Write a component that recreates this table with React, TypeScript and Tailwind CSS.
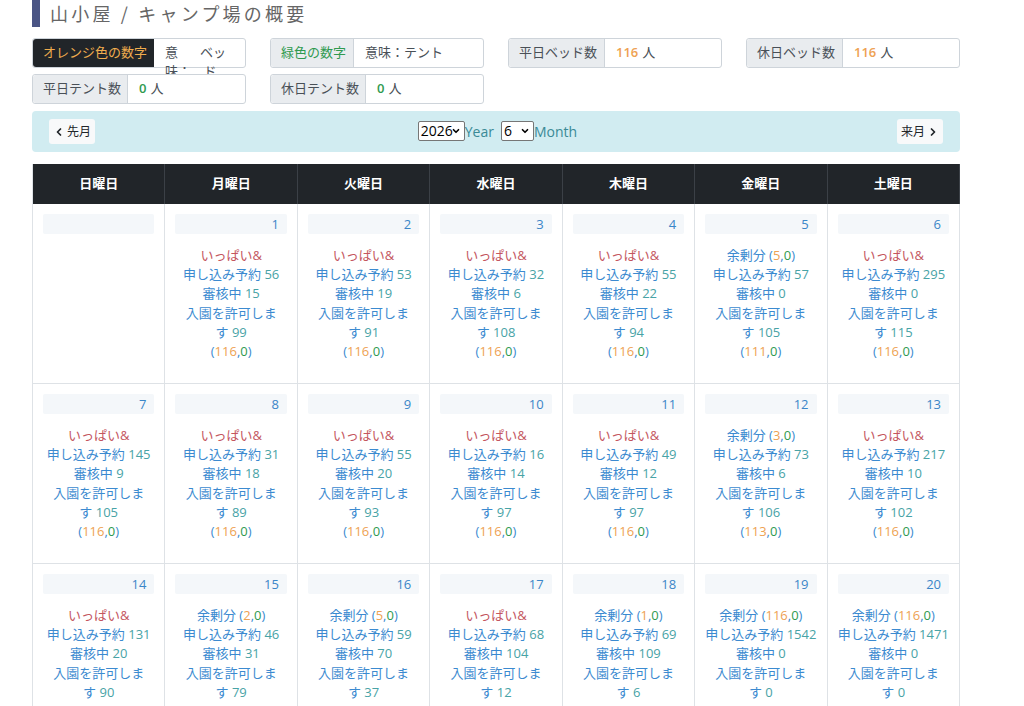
import React from 'react';
import { ChevronDown, ChevronLeft, ChevronRight } from 'lucide-react';

type Day = {
  d?: number;
  full?: boolean;
  rem?: number;
  apply?: number;
  review?: number;
  ok?: number;
  bed?: number;
};

const weeks: Day[][] = [
  [
    {},
    { d: 1, full: true, apply: 56, review: 15, ok: 99, bed: 116 },
    { d: 2, full: true, apply: 53, review: 19, ok: 91, bed: 116 },
    { d: 3, full: true, apply: 32, review: 6, ok: 108, bed: 116 },
    { d: 4, full: true, apply: 55, review: 22, ok: 94, bed: 116 },
    { d: 5, rem: 5, apply: 57, review: 0, ok: 105, bed: 111 },
    { d: 6, full: true, apply: 295, review: 0, ok: 115, bed: 116 },
  ],
  [
    { d: 7, full: true, apply: 145, review: 9, ok: 105, bed: 116 },
    { d: 8, full: true, apply: 31, review: 18, ok: 89, bed: 116 },
    { d: 9, full: true, apply: 55, review: 20, ok: 93, bed: 116 },
    { d: 10, full: true, apply: 16, review: 14, ok: 97, bed: 116 },
    { d: 11, full: true, apply: 49, review: 12, ok: 97, bed: 116 },
    { d: 12, rem: 3, apply: 73, review: 6, ok: 106, bed: 113 },
    { d: 13, full: true, apply: 217, review: 10, ok: 102, bed: 116 },
  ],
  [
    { d: 14, full: true, apply: 131, review: 20, ok: 90, bed: 116 },
    { d: 15, rem: 2, apply: 46, review: 31, ok: 79, bed: 114 },
    { d: 16, rem: 5, apply: 59, review: 70, ok: 37, bed: 111 },
    { d: 17, full: true, apply: 68, review: 104, ok: 12, bed: 116 },
    { d: 18, rem: 1, apply: 69, review: 109, ok: 6, bed: 115 },
    { d: 19, rem: 116, apply: 1542, review: 0, ok: 0, bed: 0 },
    { d: 20, rem: 116, apply: 1471, review: 0, ok: 0, bed: 0 },
  ],
];

const heads = ['日曜日', '月曜日', '火曜日', '水曜日', '木曜日', '金曜日', '土曜日'];

const Num: React.FC<{ v?: number }> = ({ v }) => <span className="text-[#48a3a6]">{v}</span>;

const Pair: React.FC<{ v?: number }> = ({ v }) => (
  <>
    (<span className="text-[#eea253]">{v}</span>,<span className="text-[#2f9a4f]">0</span>)
  </>
);

const Cell: React.FC<{ day: Day }> = ({ day }) => (
  <div className="h-[180px] border-r border-b border-[#dee2e6] pt-[10px]">
    <div className="mx-[10px] h-[20px] rounded-[2px] bg-[#f4f7fa] pr-[8px] text-right text-[13px] leading-[20px] text-[#3b86c8]">
      {day.d}
    </div>
    {day.d && (
      <div className="mt-[12px] text-center text-[13px] leading-[19.2px] text-[#3b8ad0]">
        {day.full ? (
          <div className="text-[#c4565e]">いっぱい&amp;</div>
        ) : (
          <div>
            余剰分 <Pair v={day.rem} />
          </div>
        )}
        <div>
          申し込み予約 <Num v={day.apply} />
        </div>
        <div>
          審核中 <Num v={day.review} />
        </div>
        <div>入園を許可しま</div>
        <div>
          す <Num v={day.ok} />
        </div>
        <div>
          <Pair v={day.bed} />
        </div>
      </div>
    )}
  </div>
);

const Group: React.FC<{ label: React.ReactNode; children: React.ReactNode; lw: string }> = ({ label, children, lw }) => (
  <div className="relative flex h-[30px] rounded-[3px] border border-[#ced4da] bg-white text-[13px]">
    <div className={`${lw} flex items-center rounded-l-[3px] border-r border-[#ced4da] bg-[#e9ecef] pl-[10px] text-[#495057]`}>
      {label}
    </div>
    <div className="flex items-center pl-[11px] text-[#495057]">{children}</div>
  </div>
);

const Picker: React.FC<{ value: string; w: string }> = ({ value, w }) => (
  <div className={`relative flex h-[20px] ${w} items-center rounded-[2px] border border-[#767676] bg-white`}>
    <select
      defaultValue={value}
      className="h-full w-full appearance-none bg-transparent pl-[2px] text-[14px] leading-[18px] text-black"
    >
      <option>{value}</option>
    </select>
    <ChevronDown size={10} strokeWidth={4} className="pointer-events-none absolute right-[3px] top-[4px] text-black" />
  </div>
);

export default function App() {
  return (
    <div className="min-h-[706px] w-[1024px] bg-white font-['Open_Sans','Noto_Sans_CJK_JP',sans-serif]">
      <div className="ml-[32px] w-[928px]">
        {/* title */}
        <div className="flex h-[27px] items-center border-l-[8px] border-[#4a5585] pl-[10px] font-['Noto_Sans_CJK_JP',sans-serif] text-[18px] tracking-[3.2px] text-[#666]">
          山小屋 / キャンプ場の概要
        </div>

        {/* legend / counts */}
        <div className="mt-[11px] grid grid-cols-4 gap-x-6 gap-y-[6px]">
          <div className="flex h-[30px] rounded-[3px] border border-[#ced4da] bg-white text-[13px]">
            <div className="flex w-[121px] items-center rounded-l-[3px] bg-[#212529] pl-[10px] text-[#f0ad4e]">
              オレンジ色の数字
            </div>
            <div className="flex gap-[9px] pl-[11px] pt-[4px] leading-[18.5px] text-[#495057]">
              <div>
                <div>意</div>
                <div>味：</div>
              </div>
              <div>
                <div>ベッ</div>
                <div>&nbsp;ド</div>
              </div>
            </div>
          </div>
          <Group label={<span className="text-[#2f9a4f]">緑色の数字</span>} lw="w-[83px]">
            意味：テント
          </Group>
          <Group label="平日ベッド数" lw="w-[96px]">
            <span className="font-semibold text-[#eea253]">116</span>
            <span className="ml-[4px]">人</span>
          </Group>
          <Group label="休日ベッド数" lw="w-[96px]">
            <span className="font-semibold text-[#eea253]">116</span>
            <span className="ml-[4px]">人</span>
          </Group>
          <Group label="平日テント数" lw="w-[95px]">
            <span className="font-semibold text-[#2f9a4f]">0</span>
            <span className="ml-[4px]">人</span>
          </Group>
          <Group label="休日テント数" lw="w-[95px]">
            <span className="font-semibold text-[#2f9a4f]">0</span>
            <span className="ml-[4px]">人</span>
          </Group>
        </div>

        {/* month nav */}
        <div className="mt-[7px] flex h-[41px] items-center justify-between rounded-[4px] bg-[#d1ecf1] px-[17px]">
          <button className="flex h-[25px] w-[46px] items-center justify-center gap-[2px] rounded-[3px] bg-[#f8f9fa] text-[12px] text-[#212529]">
            <ChevronLeft size={12} strokeWidth={3.5} />
            先月
          </button>
          <div className="-mt-[1px] ml-[3px] flex items-center text-[14px] text-[#3a8a96]">
            <Picker value="2026" w="w-[47px]" />
            <span className="mr-[7px]">Year</span>
            <Picker value="6" w="w-[33px]" />
            <span>Month</span>
          </div>
          <button className="flex h-[25px] w-[46px] items-center justify-center gap-[2px] rounded-[3px] bg-[#f8f9fa] text-[12px] text-[#212529]">
            来月
            <ChevronRight size={12} strokeWidth={3.5} />
          </button>
        </div>

        {/* calendar */}
        <div className="mt-[12px] grid grid-cols-7 border-l border-[#dee2e6]">
          {heads.map((h) => (
            <div
              key={h}
              className="flex h-[40px] items-center justify-center border-r border-[#3b4046] bg-[#212529] text-[13px] font-bold text-white"
            >
              {h}
            </div>
          ))}
          {weeks.flat().map((day, i) => (
            <Cell key={i} day={day} />
          ))}
        </div>
      </div>
    </div>
  );
}
